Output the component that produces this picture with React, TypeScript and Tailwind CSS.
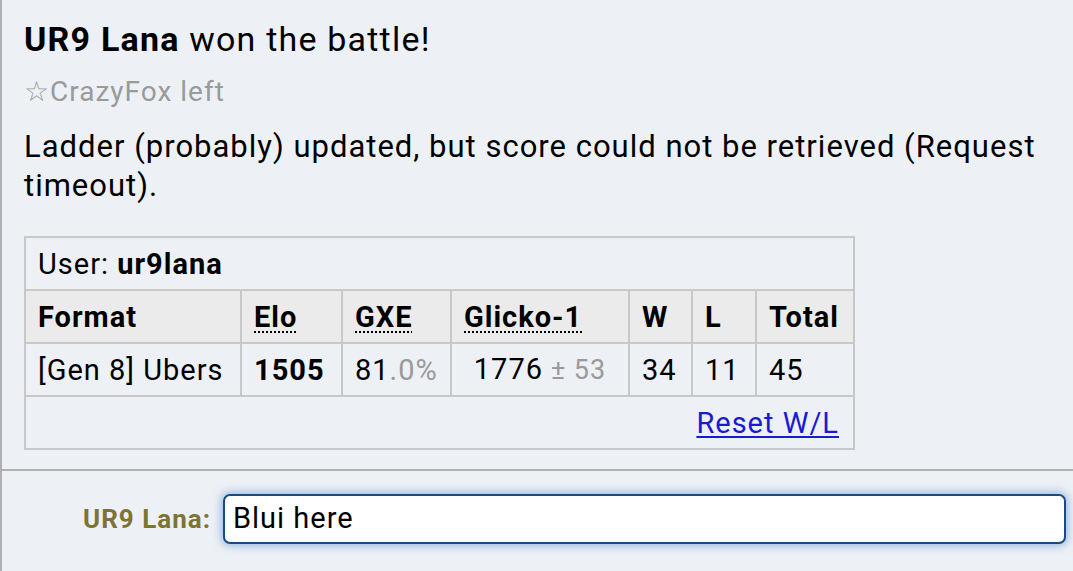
export default function App() {
  return (
    <div className="min-h-[571px] w-[1073px] bg-[#edf1f5] border-l-2 border-[#b0b0b0] font-['Roboto',sans-serif] text-black">
      {/* battle log */}
      <div className="pl-[22px] pr-4 pt-[20px] pb-[19px]">
        <div className="text-[34px] leading-[39px] tracking-[1.2px]">
          <strong className="font-bold">UR9 Lana</strong> won the battle!
        </div>
        <div className="mt-[13px] text-[28px] leading-[39px] tracking-[1px] text-[#9a9a9a]">☆CrazyFox left</div>
        <div className="mt-[16px] text-[31px] leading-[39px] tracking-[1px]">
          Ladder (probably) updated, but score could not be retrieved (Request timeout).
        </div>

        <table className="mt-[31px] border-collapse text-[29px] leading-[34px] tracking-[1px]">
          <tbody>
            <tr className="h-[53px]">
              <td colSpan={7} className="border-2 border-[#c8c8c8] px-[12px]">
                User: <strong className="font-bold">ur9lana</strong>
              </td>
            </tr>
            <tr className="h-[53px] bg-[#ebebeb] font-bold">
              <th className="w-[216px] border-2 border-[#c8c8c8] px-[12px] text-left">Format</th>
              <th className="w-[101px] border-2 border-[#c8c8c8] px-[12px] text-left">
                <abbr className="underline decoration-dotted decoration-2 underline-offset-[5px]">Elo</abbr>
              </th>
              <th className="w-[109px] border-2 border-[#c8c8c8] px-[12px] text-left">
                <abbr className="underline decoration-dotted decoration-2 underline-offset-[5px]">GXE</abbr>
              </th>
              <th className="w-[178px] border-2 border-[#c8c8c8] px-[12px] text-left">
                <abbr className="underline decoration-dotted decoration-2 underline-offset-[5px]">Glicko-1</abbr>
              </th>
              <th className="w-[63px] border-2 border-[#c8c8c8] px-[12px] text-left">W</th>
              <th className="w-[64px] border-2 border-[#c8c8c8] px-[12px] text-left">L</th>
              <th className="w-[98px] border-2 border-[#c8c8c8] px-[12px] text-left">Total</th>
            </tr>
            <tr className="h-[53px]">
              <td className="border-2 border-[#c8c8c8] px-[12px] whitespace-nowrap">[Gen 8] Ubers</td>
              <td className="border-2 border-[#c8c8c8] px-[12px] font-bold">1505</td>
              <td className="border-2 border-[#c8c8c8] px-[12px]">
                81<span className="text-[#9a9a9a]">.0%</span>
              </td>
              <td className="border-2 border-[#c8c8c8] px-[12px] text-center whitespace-nowrap">
                1776<span className="text-[27px] text-[#9a9a9a]"> ± 53</span>
              </td>
              <td className="border-2 border-[#c8c8c8] px-[12px]">34</td>
              <td className="border-2 border-[#c8c8c8] px-[12px]">11</td>
              <td className="border-2 border-[#c8c8c8] px-[12px]">45</td>
            </tr>
            <tr className="h-[53px]">
              <td colSpan={7} className="border-2 border-[#c8c8c8] px-[14px] text-right">
                <a href="#" className="text-[#1a1ad2] underline underline-offset-[3px]">
                  Reset W/L
                </a>
              </td>
            </tr>
          </tbody>
        </table>
      </div>

      {/* chat box */}
      <div className="border-t-2 border-[#b0b0b0] flex items-center pt-[23px] pb-[25px] pl-[70px] pr-[7px]">
        <span className="w-[139px] text-right text-[26px] tracking-[1px] font-bold text-[#7d7434]">UR9 Lana:</span>
        <div className="ml-[12px] flex h-[50px] flex-1 items-center rounded-[7px] border-2 border-[#1b4a83] bg-white pl-[8px] text-[29px] tracking-[1px] shadow-[0_0_8px_2px_rgba(80,140,210,0.55)]">
          Blui here
        </div>
      </div>
    </div>
  );
}
